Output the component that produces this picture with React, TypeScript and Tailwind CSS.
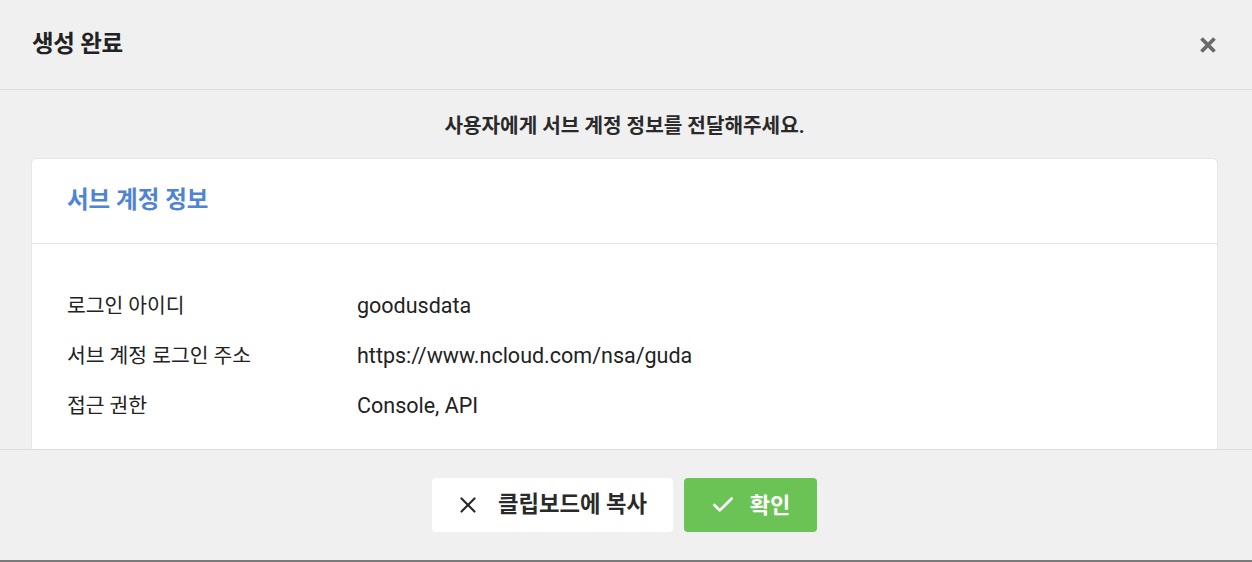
import { X, Check } from "lucide-react"

const rows = [
  { label: "로그인 아이디", value: "goodusdata" },
  { label: "서브 계정 로그인 주소", value: "https://www.ncloud.com/nsa/guda" },
  { label: "접근 권한", value: "Console, API" },
]

export default function App() {
  return (
    <div
      className="w-[1252px] h-[562px] bg-[#f0f0f0] flex flex-col overflow-hidden border-b-2 border-[#7a7a7a]"
      style={{ fontFamily: "Roboto, 'Noto Sans CJK KR', sans-serif" }}
    >
      {/* header */}
      <div className="h-[90px] shrink-0 flex items-center justify-between pl-[32px] pr-[35px] border-b border-[#dcdcdc]">
        <h1 className="text-[23.5px] font-bold text-[#222] tracking-[-0.3px]">생성 완료</h1>
        <button className="text-[#6a6a6a]" aria-label="닫기">
          <svg width="18" height="18" viewBox="0 0 18 18">
            <path d="M2.5 2.5 L15.5 15.5 M15.5 2.5 L2.5 15.5" stroke="currentColor" strokeWidth="3.8" />
          </svg>
        </button>
      </div>

      {/* body */}
      <div className="flex-1 overflow-hidden pt-[23px] pl-[31px] pr-[34px]">
        <p className="text-center text-[20.2px] leading-[26px] font-bold text-[#2a2a2a] mb-[19px]">
          사용자에게 서브 계정 정보를 전달해주세요.
        </p>
        <div className="bg-white rounded-[5px] border border-[#e6e6e6]">
          <div className="h-[85px] flex items-center pl-[35px] border-b border-[#e2e2e2]">
            <h2 className="text-[23.5px] font-bold text-[#4f84d4]">서브 계정 정보</h2>
          </div>
          <div className="pt-[37px] pb-[20px] pl-[35px]">
            {rows.map((r) => (
              <div key={r.label} className="flex items-center h-[50px] text-[#222]">
                <div className="w-[290px] text-[20.4px]">{r.label}</div>
                <div className="text-[21.5px]">{r.value}</div>
              </div>
            ))}
          </div>
        </div>
      </div>

      {/* footer */}
      <div className="h-[111px] shrink-0 border-t border-[#dcdcdc] flex items-center justify-center gap-[11px] pr-[4px]">
        <button className="w-[241px] h-[54px] bg-white rounded-[4px] flex items-center justify-center gap-[17px] pr-[2px] text-[22.3px] font-bold text-[#2a2a2a]">
          <X className="w-[26px] h-[26px]" strokeWidth={2} />
          <span>클립보드에 복사</span>
        </button>
        <button className="w-[133px] h-[54px] bg-[#6cc355] rounded-[4px] flex items-center justify-center gap-[14px] text-[22px] font-bold text-white">
          <Check className="w-[26px] h-[26px]" strokeWidth={2.5} />
          <span>확인</span>
        </button>
      </div>
    </div>
  )
}
